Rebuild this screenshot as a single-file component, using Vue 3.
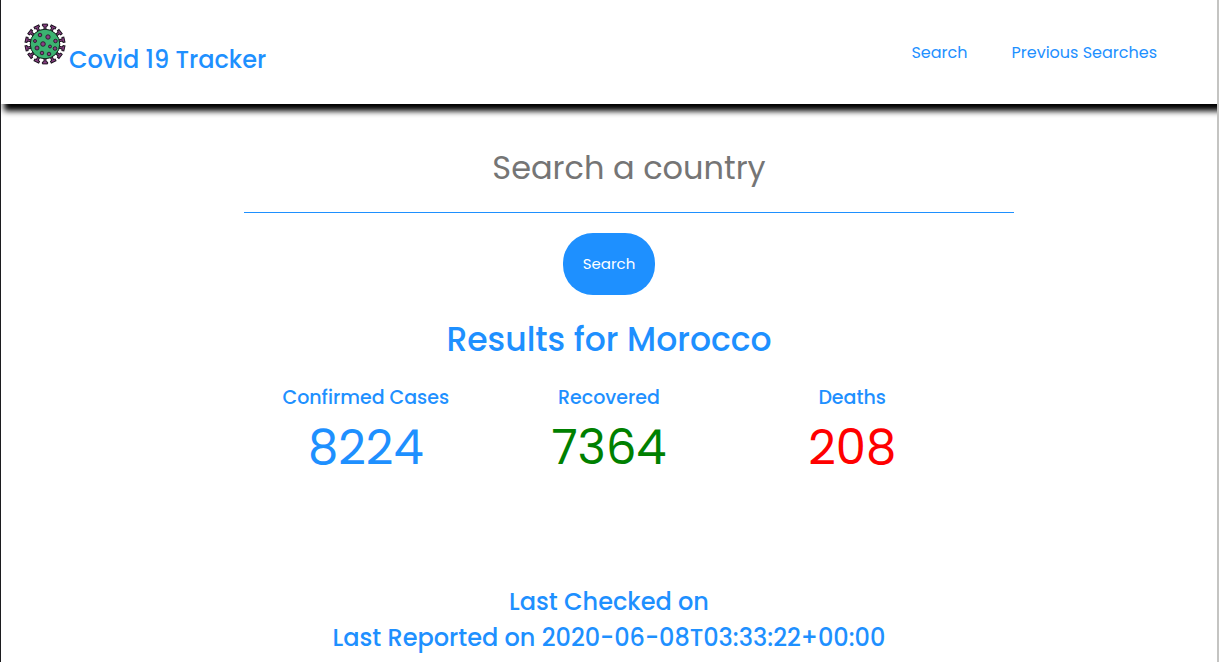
<script setup>
import { ref } from 'vue'

const country = ref('')
const spikes = Array.from({ length: 14 }, (_, i) => i * 360 / 14)
const spots = [
  [-5, -9, 1.8], [3, -7, 2.2], [-10, -3, 1.5], [-2, 0, 2.3], [10.5, -3, 1.8],
  [5, 2.5, 1.5], [10, 4.5, 1.8], [-8, 4, 2], [-3, 9, 1.8], [4, 10, 1.8],
]
const stats = [
  { label: 'Confirmed Cases', value: 8224, tone: 'confirmed' },
  { label: 'Recovered', value: 7364, tone: 'recovered' },
  { label: 'Deaths', value: 208, tone: 'deaths' },
]
</script>

<template>
  <div class="page">
    <header class="header">
      <div class="brand">
        <svg class="logo" viewBox="-22 -21 43 43" aria-hidden="true">
          <g v-for="angle in spikes" :key="angle" :transform="`rotate(${angle})`">
            <path class="spike" d="M-1 -14.5 L-1 -17.6 L-2.6 -18 L-2.6 -19.9 L2.6 -19.9 L2.6 -18 L1 -17.6 L1 -14.5 Z" />
          </g>
          <circle class="body" r="14.8" />
          <circle v-for="(s, i) in spots" :key="i" class="spot" :cx="s[0]" :cy="s[1]" :r="s[2]" />
        </svg>
        <h2 class="title">Covid 19 Tracker</h2>
      </div>
      <nav class="nav">
        <a href="#search">Search</a>
        <a href="#previous">Previous Searches</a>
      </nav>
    </header>
    <main class="main">
      <form id="search" class="form" @submit.prevent>
        <input v-model="country" class="field" type="text" placeholder="Search a country" aria-label="Search a country">
        <button class="submit" type="submit">Search</button>
      </form>
      <h1 class="heading">Results for Morocco</h1>
      <section class="stats">
        <div v-for="s in stats" :key="s.label" class="stat">
          <h3 class="label">{{ s.label }}</h3>
          <p class="value" :class="s.tone">{{ s.value }}</p>
        </div>
      </section>
      <footer class="dates">
        <h2 class="date">Last Checked on</h2>
        <h2 class="date">Last Reported on 2020-06-08T03:33:22+00:00</h2>
      </footer>
    </main>
  </div>
</template>

<style>
body {
  background: #fff;
}
</style>

<style scoped>
.page {
  box-sizing: border-box;
  min-height: 100vh;
  border-left: 1px solid #1c1c1f;
  border-right: 2px solid #c4c4c2;
  overflow: hidden;
  font-family: Poppins, Inter, "Open Sans", sans-serif;
  color: dodgerblue;
}
h1, h2, h3, p {
  margin: 0;
  font-weight: 500;
}
.header {
  display: flex;
  justify-content: space-between;
  align-items: center;
  height: 104px;
  padding: 0 60px 0 22px;
  box-sizing: border-box;
  box-shadow: 5px 5px 6px 2px #000;
}
.brand {
  display: flex;
  align-items: flex-start;
  gap: 3px;
  padding-bottom: 3px;
}
.logo {
  width: 43px;
  height: 43px;
}
.spike, .spot {
  fill: #8a3f84;
  stroke: #1c1420;
  stroke-width: 1;
}
.spot {
  stroke-width: 0.8;
}
.body {
  fill: #3cb371;
  stroke: #14221c;
  stroke-width: 1;
}
.title {
  padding-top: 19px;
  font-size: 24px;
  line-height: 36px;
}
.nav {
  display: flex;
  gap: 44px;
  padding-top: 2px;
}
.nav a {
  color: inherit;
  font-size: 16px;
  line-height: 24px;
  text-decoration: none;
}
.main {
  width: 60%;
  margin: 0 auto;
  padding-top: 20px;
}
.form {
  display: flex;
  flex-direction: column;
  align-items: center;
  gap: 20px;
}
.field {
  align-self: flex-start;
  box-sizing: border-box;
  width: calc(100% + 40px);
  height: 89px;
  padding: 20px;
  border: 0;
  border-bottom: 1px solid dodgerblue;
  outline: 0;
  background: transparent;
  color: dodgerblue;
  font: 400 32px/48px Poppins, Inter, "Open Sans", sans-serif;
  text-align: center;
}
.field::placeholder {
  color: #757575;
  opacity: 1;
}
.submit {
  padding: 20px;
  border: 0;
  border-radius: 30px;
  background: dodgerblue;
  color: #fff;
  font: 400 15px/22px Poppins, Inter, "Open Sans", sans-serif;
}
.heading {
  margin-top: 21px;
  font-size: 33px;
  line-height: 48px;
  text-align: center;
}
.stats {
  display: grid;
  grid-template-columns: repeat(3, 1fr);
  margin-top: 20px;
  text-align: center;
}
.label {
  font-size: 19px;
  line-height: 28px;
}
.value {
  font-size: 48px;
  font-weight: 400;
  line-height: 72px;
}
.recovered {
  color: green;
}
.deaths {
  color: red;
}
.dates {
  margin-top: 100px;
  text-align: center;
}
.date {
  font-size: 24px;
  line-height: 36px;
}
</style>
